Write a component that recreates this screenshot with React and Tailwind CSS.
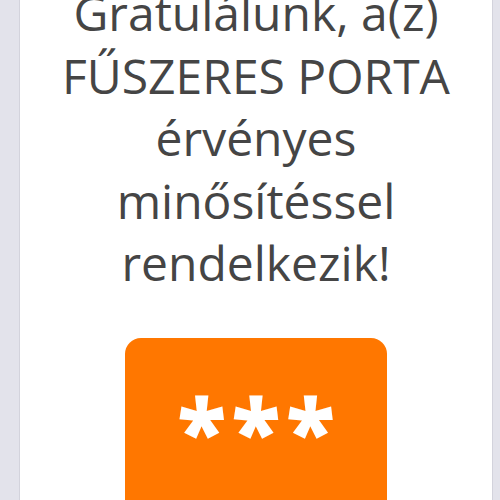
export default function App() {
  return (
    <div className="w-[500px] h-[500px] overflow-hidden bg-[#e3e3eb] flex">
      <div className="ml-[19px] w-[474px] h-full bg-white border-x border-[#d3d3dc] flex flex-col items-center">
        <h1
          className="mt-[-18px] text-center text-[48px] leading-[62.5px] text-[#454545] font-normal"
          style={{ fontFamily: '"Open Sans", "Noto Sans", sans-serif' }}
        >
          Gratulálunk, a(z)
          <br />
          FŰSZERES PORTA
          <br />
          érvényes
          <br />
          minősítéssel
          <br />
          rendelkezik!
        </h1>
        <div className="mt-[43px] w-[262px] h-[220px] shrink-0 rounded-[16px] bg-[#ff7700] flex justify-center pt-[46px]">
          <span
            className="text-[90px] leading-none font-extrabold text-white tracking-[6px] pl-[6px]"
            style={{ fontFamily: '"Open Sans", "Noto Sans", sans-serif' }}
          >
            ***
          </span>
        </div>
      </div>
    </div>
  );
}
